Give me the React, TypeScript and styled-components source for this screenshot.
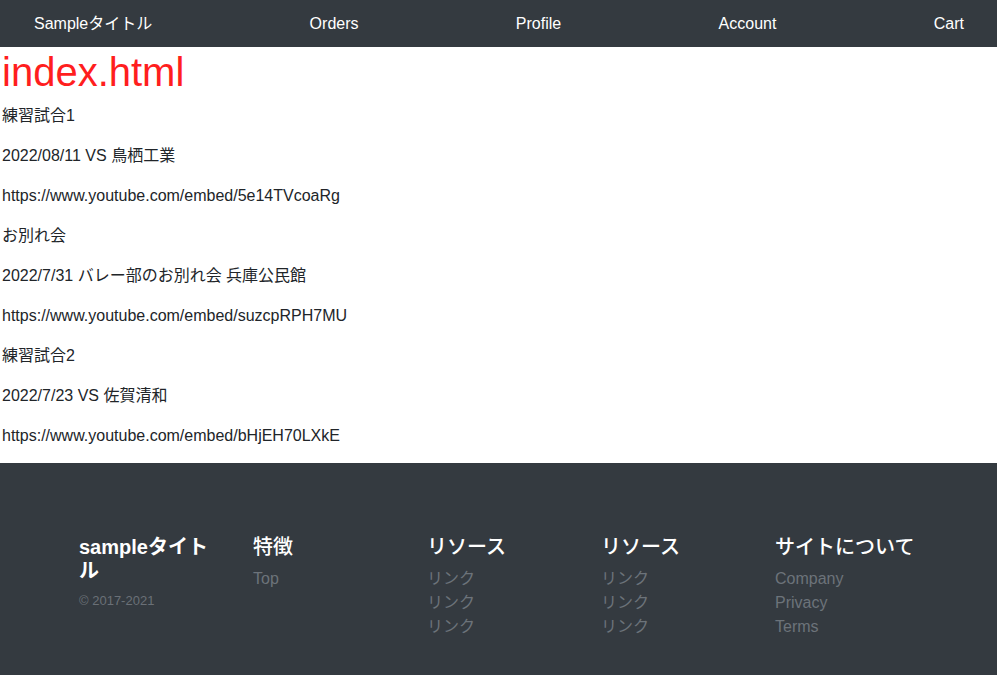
import { createGlobalStyle } from "styled-components"
import styled from "styled-components"

const GlobalStyle = createGlobalStyle`
  body {
    margin: 0;
    font-family: "Liberation Sans", "Noto Sans CJK JP", sans-serif;
    font-size: 16px;
    line-height: 1.5;
    color: #212529;
    background: #fff;
  }
`

const NavBar = styled.nav`
  height: 47px;
  background: #343a40;
  display: flex;
  align-items: center;
  justify-content: space-between;
  padding: 0 33px 0 34px;
`

const NavLink = styled.a`
  color: #fff;
  text-decoration: none;
  font-size: 16px;
`

const Main = styled.main`
  padding: 1px 0 0 2px;
  border-left: 1px solid #9a9a9a;
  margin-left: -1px;
  display: flow-root;
`

const Title = styled.h1`
  margin: 0 0 8px;
  font-size: 40px;
  font-weight: 500;
  line-height: 1.2;
  color: #ff1e1e;
`

const Para = styled.p`
  margin: 0 0 16px;
`

const Footer = styled.footer`
  background: #343a40;
  margin-top: -1px;
  padding: 72px 0 48px 67px;
`

const FooterRow = styled.div`
  display: grid;
  grid-template-columns: repeat(5, 174px);
`

const FooterCol = styled.div`
  padding: 0 12px;
`

const FooterHeading = styled.h5<{ $brand?: boolean }>`
  margin: 0 0 8px;
  font-size: 20px;
  line-height: 1.2;
  color: #fff;
  font-weight: ${p => (p.$brand ? 700 : 500)};
  max-width: ${p => (p.$brand ? "130px" : "none")};
`

const Copy = styled.small`
  display: block;
  font-size: 13px;
  color: #6a7077;
`

const LinkList = styled.ul`
  list-style: none;
  margin: 0;
  padding: 0;
`

const FooterLink = styled.a`
  display: block;
  color: #6c737a;
  text-decoration: none;
  line-height: 24px;
`

const posts = [
  ["練習試合1", "2022/08/11 VS 鳥栖工業", "https://www.youtube.com/embed/5e14TVcoaRg"],
  ["お別れ会", "2022/7/31 バレー部のお別れ会 兵庫公民館", "https://www.youtube.com/embed/suzcpRPH7MU"],
  ["練習試合2", "2022/7/23 VS 佐賀清和", "https://www.youtube.com/embed/bHjEH70LXkE"],
]

const footerCols = [
  { title: "特徴", links: ["Top"] },
  { title: "リソース", links: ["リンク", "リンク", "リンク"] },
  { title: "リソース", links: ["リンク", "リンク", "リンク"] },
  { title: "サイトについて", links: ["Company", "Privacy", "Terms"] },
]

export default function App() {
  return (
    <>
      <GlobalStyle />
      <NavBar>
        <NavLink href="#">Sampleタイトル</NavLink>
        <NavLink href="#">Orders</NavLink>
        <NavLink href="#">Profile</NavLink>
        <NavLink href="#">Account</NavLink>
        <NavLink href="#">Cart</NavLink>
      </NavBar>
      <Main>
        <Title>index.html</Title>
        {posts.map((p, i) => (
          <div key={i}>
            {p.map((line, j) => <Para key={j}>{line}</Para>)}
          </div>
        ))}
      </Main>
      <Footer>
        <FooterRow>
          <FooterCol>
            <FooterHeading $brand>sampleタイトル</FooterHeading>
            <Copy>© 2017-2021</Copy>
          </FooterCol>
          {footerCols.map((c, i) => (
            <FooterCol key={i}>
              <FooterHeading>{c.title}</FooterHeading>
              <LinkList>
                {c.links.map((l, j) => (
                  <li key={j}><FooterLink href="#">{l}</FooterLink></li>
                ))}
              </LinkList>
            </FooterCol>
          ))}
        </FooterRow>
      </Footer>
    </>
  )
}
